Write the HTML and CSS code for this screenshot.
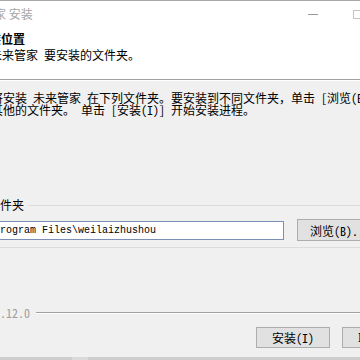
FILE: index.html
```html
<!DOCTYPE html>
<html lang="zh-CN">
<head>
<meta charset="utf-8">
<link rel="stylesheet" href="styles.css">
</head>
<body>
<div class="win">
  <div class="topline"></div>
  <div class="header">
    <div class="titlebar">
      <span class="title">未来管家 安装</span>
      <span class="ctrls"><span class="min"></span><span class="max"></span></span>
    </div>
    <div class="h-title">选择安装位置</div>
    <div class="h-sub">选择 未来管家 要安装的文件夹。</div>
  </div>
  <div class="sep"></div>
  <div class="body">
    <p class="desc">将安装 未来管家 在下列文件夹。要安装到不同文件夹，单击 [浏览(B)] 并选择<br>其他的文件夹。 单击 [安装(I)] 开始安装进程。</p>
    <div class="group">
      <div class="group-head"><span class="legend">目标文件夹</span><span class="gline"></span></div>
      <div class="group-row">
        <div class="path"><span class="path-text">C:\Program Files\weilaizhushou</span></div>
        <div class="btn browse">浏览(B)...</div>
      </div>
    </div>
    <div class="brand"><span class="brand-text">未来管家 v1.12.0</span><span class="bline"></span></div>
    <div class="buttons">
      <div class="btn act">安装(I)</div>
      <div class="btn act">取消(C)</div>
    </div>
  </div>
  <div class="bottom"><span class="grip"></span></div>
</div>
</body>
</html>
```

FILE: styles.css
```css
* { box-sizing: border-box; }
html, body { margin: 0; padding: 0; }
body {
  width: 360px;
  height: 360px;
  overflow: hidden;
  background: #f0f0f0;
  font-family: "Noto Sans Mono CJK SC", "Noto Sans CJK SC", "Liberation Sans", sans-serif;
  font-size: 12px;
  color: #000;
}
.win { width: 360px; height: 360px; display: flex; flex-direction: column; overflow: hidden; }
.win > * { flex: none; }
.topline { height: 1px; background: #a9a9a9; }
.header { height: 78px; background: #fff; white-space: nowrap; }
.titlebar { height: 26px; display: flex; align-items: center; justify-content: space-between; }
.title { margin-left: -42px; color: #a6a6a6; line-height: 16px; font-family: "Noto Sans CJK SC", sans-serif; }
.ctrls { display: flex; align-items: center; }
.min { width: 10px; height: 1px; background: #9a9a9a; margin-right: 35px; }
.max { width: 10px; height: 9px; border: 1px solid #c4c4c4; margin-right: -3px; }
.h-title { margin-top: 5px; margin-left: -47px; font-weight: bold; line-height: 14px; }
.h-sub { margin-top: 2px; margin-left: -40px; line-height: 14px; }
.sep { height: 2px; border-top: 1px solid #a0a0a0; border-bottom: 1px solid #fff; }
.body { height: 276px; display: flex; flex-direction: column; white-space: nowrap; }
.body > * { flex: none; }
.desc { margin: 11px 0 0 -9px; line-height: 12px; height: 24px; }
.group { margin-top: 83px; height: 49px; padding-bottom: 6px; border-bottom: 1px solid #dcdcdc; }
.group-head { display: flex; align-items: center; height: 12px; }
.legend { margin-left: -36px; line-height: 12px; }
.gline { flex: 1; height: 1px; background: #dcdcdc; margin-left: 4px; }
.group-row { margin-top: 8px; display: flex; align-items: center; height: 22px; }
.path {
  width: 284px; height: 19px; background: #fff; border: 1px solid #7a8fb3; border-left: none;
  display: flex; align-items: center; overflow: hidden; flex: none;
}
.path-text { margin-left: -24px; font-family: "Liberation Mono", monospace; font-size: 10px; }
.btn {
  height: 22px; background: #e1e1e1; border: 1px solid #adadad;
  display: flex; align-items: center; flex: none;
}
.browse { margin-left: 13px; width: 75px; padding-left: 12px; }
.brand { margin-top: 59px; display: flex; align-items: center; height: 12px; }
.brand-text { margin-left: -66px; color: #a0a0a0; line-height: 12px; }
.bline { flex: 1; height: 2px; border-top: 1px solid #a0a0a0; border-bottom: 1px solid #fff; margin-left: 6px; }
.buttons { margin-top: 8px; height: 21px; display: flex; padding-left: 256px; gap: 12px; }
.act { width: 74px; height: 21px; justify-content: center; }
.bottom { height: 3px; background: #cdcdcd; display: flex; }
.grip { width: 16px; margin-left: 72px; background: #dadada; }
```
